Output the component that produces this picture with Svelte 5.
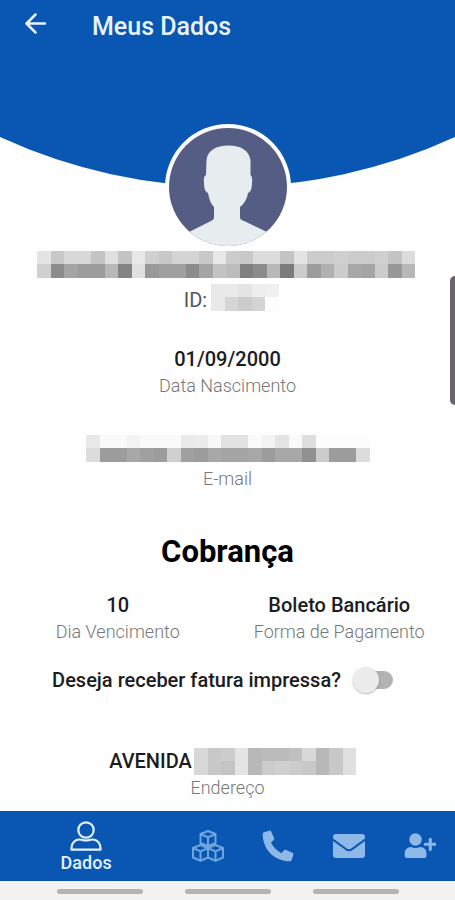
<script>
  const nameBlocks = [
    'e4 c8 d8 d8 c4 e0 c4 e8 d0 c8 d4 d4 c8 e8 cc c8 dc dc c4 e4 cc cc d0 cc cc d0 c4 dc',
    'd0 8c a4 9c 9c b8 84 e0 98 a0 a0 8c a4 c4 bc 80 8c b8 7c cc 9c b0 cc a8 a4 cc 98 b8'
  ];
  const idBlocks = ['e9 ea e4 ee f0', 'e9 d6 cc d4 fd'];
  const emailBlocks = [
    'e8 fa fa f3 fa fa fa ea ec f8 e2 e2 fa f3 e4 fa de fc fc fc fc',
    'dc 9c 9c a8 a0 9c d0 a0 9c a8 a4 a4 a8 9c a8 a8 90 cc 9c 9c dc'
  ];
  const addressBlocks = [
    'd8 c8 cc e4 b8 bb bb c0 d8 b8 c8 e0',
    'd8 c8 c4 e4 b8 cc d0 cc c8 b8 c8 e0'
  ];
  let printed = $state(false);
</script>

{#snippet mosaic(rows, label)}
  <span class="mosaic" role="img" aria-label={label}>
    {#each rows as row}
      <span class="mosaic-row">
        {#each row.split(' ') as tone}
          <i style="background: #{tone}{tone}{tone}"></i>
        {/each}
      </span>
    {/each}
  </span>
{/snippet}

<div class="app">
  <header>
    <div class="bar">
      <a class="back" href="#voltar" aria-label="Voltar">
        <svg width="22" height="22" viewBox="0 0 22 22" fill="none" stroke="#e8f4fd" stroke-width="2.5" stroke-linecap="round" stroke-linejoin="round">
          <path d="M20 10.500H2M10.500 1.500L1.500 10.500l9 9" />
        </svg>
      </a>
      <h1>Meus Dados</h1>
    </div>
    <svg class="curve" viewBox="0 0 455 50" preserveAspectRatio="none" aria-hidden="true">
      <path d="M0 0A545 545 0 0 0 455 0Z" fill="#0a57b3" />
    </svg>
  </header>

  <main>
    <div class="avatar">
      <svg viewBox="0 0 118 118" width="118" height="118" aria-hidden="true">
        <defs><clipPath id="disc"><circle cx="59" cy="59" r="59" /></clipPath></defs>
        <g clip-path="url(#disc)">
          <rect width="118" height="118" fill="#565d84" />
          <path d="M59.500 17.500C47 17.500 38.500 22.500 37.500 32L37 47C35 48 34.500 51 35 55C35 61 36.500 64 39 65C40 71 42 76 45 79V89C45 91 44 92 42 93L21 103.500L0 118H118L97 103.500L75 93C72 92 71 91 71 89V79C75 76 78 71 79 65C81.500 64 83 61 83 55C83.500 51 83 48 81.500 47V32C80 22.500 72 17.500 59.500 17.500Z" fill="#e7edef" />
        </g>
      </svg>
    </div>
    <div class="line name">{@render mosaic(nameBlocks, 'Nome oculto')}</div>
    <div class="line id"><span>ID:</span>{@render mosaic(idBlocks, 'ID oculto')}</div>

    <section class="field birth">
      <strong>01/09/2000</strong>
      <span>Data Nascimento</span>
    </section>
    <section class="field email">
      {@render mosaic(emailBlocks, 'E-mail oculto')}
      <span>E-mail</span>
    </section>

    <h2>Cobrança</h2>
    <div class="columns">
      <section class="field">
        <strong>10</strong>
        <span>Dia Vencimento</span>
      </section>
      <section class="field">
        <strong>Boleto Bancário</strong>
        <span>Forma de Pagamento</span>
      </section>
    </div>

    <label class="toggle">
      <span>Deseja receber fatura impressa?</span>
      <input type="checkbox" role="switch" bind:checked={printed} />
    </label>

    <section class="field address">
      <div class="line"><strong>AVENIDA</strong>{@render mosaic(addressBlocks, 'Endereço oculto')}</div>
      <span>Endereço</span>
    </section>
  </main>

  <nav>
    <a class="active" href="#dados">
      <svg width="32" height="30" viewBox="0 0 32 30" fill="none" stroke="#e4f1fc" stroke-width="2.2" stroke-linejoin="round">
        <circle cx="16" cy="9" r="7.700" />
        <path d="M1.500 28.700V27C1.500 21.500 5.500 18.500 9.500 18.500C12 18.500 13 19.500 16 19.500S20 18.500 22.500 18.500C26.500 18.500 30.500 21.500 30.500 27V28.700Z" />
      </svg>
      <span>Dados</span>
    </a>
    <a href="#produtos" aria-label="Produtos">
      <svg width="32" height="32" viewBox="0 0 32 32" fill="none" stroke="#6fa6df" stroke-width="2" stroke-linejoin="round">
        <path d="M16 1L23.500 4V13L16 16L8.500 13V4ZM8.500 4L16 7.300L23.500 4M16 7.300V16" />
        <path d="M8.500 15L16 18V27.500L8.500 30.800L1 27.500V18ZM1 18L8.500 21.300L16 18M8.500 21.300V30.800" />
        <path d="M23.500 15L31 18V27.500L23.500 30.800L16 27.500V18ZM16 18L23.500 21.300L31 18M23.500 21.300V30.800" />
      </svg>
    </a>
    <a href="#telefone" aria-label="Telefone">
      <svg width="32" height="32" viewBox="0 0 32 32" fill="#8db8e8">
        <path d="M2 2.300L7.300.7Q8.600.3 9.200 1.500L12 8Q12.500 9.300 11.500 10.200L8.900 12.500Q12.500 19.500 19.500 23.200L21.800 20.500Q22.700 19.500 24 20L30.500 22.800Q31.700 23.400 31.300 24.700L29.700 30Q29.300 31.300 27.900 31.300C12.500 31.300.7 19.500.7 4Q.7 2.700 2 2.300Z" />
      </svg>
    </a>
    <a href="#mensagens" aria-label="Mensagens">
      <svg width="32" height="32" viewBox="0 0 32 32" fill="#8db8e8">
        <path d="M3 4H29Q32 4 32 7V8.500L18.500 18.300Q16 20 13.500 18.300L0 8.500V7Q0 4 3 4Z" />
        <path d="M0 11L12.500 20Q16 22.500 19.500 20L32 11V25Q32 28 29 28H3Q0 28 0 25Z" />
      </svg>
    </a>
    <a href="#indicar" aria-label="Indicar amigo">
      <svg width="32" height="32" viewBox="0 0 32 32" fill="#8db8e8">
        <circle cx="11.500" cy="9.500" r="6.200" />
        <path d="M7 17Q11.500 19 16 17Q22.500 17.500 22.500 23.500V26Q22.500 28 20.500 28H2.700Q.7 28 .7 26V23.500Q.7 17.500 7 17Z" />
        <path d="M26.300 9.200V19.400M21.200 14.300H31.400" stroke="#8db8e8" stroke-width="3" stroke-linecap="round" />
      </svg>
    </a>
  </nav>
  <div class="system"><i></i><i></i><i></i></div>
  <div class="edge"></div>
</div>

<style>
  :global(body) {
    background: #fefefe;
  }
  .app {
    position: relative;
    display: flex;
    flex-direction: column;
    min-height: 100vh;
    font-family: Roboto, "Liberation Sans", sans-serif;
    font-size: 20px;
    line-height: 28px;
    color: #1c1c1e;
  }
  .bar {
    display: flex;
    align-items: flex-start;
    gap: 45px;
    box-sizing: border-box;
    height: 137px;
    padding: 13px 25px;
    background: #0a57b3;
  }
  .back {
    display: flex;
    height: 28px;
  }
  h1 {
    margin: 0;
    font-size: 25px;
    font-weight: 500;
    color: #e8f4fd;
  }
  .curve {
    display: block;
    width: 100%;
    height: 50px;
  }
  main {
    display: flex;
    flex: 1;
    flex-direction: column;
    align-items: center;
  }
  .avatar {
    position: relative;
    display: flex;
    margin-top: -63px;
    padding: 4px;
    border-radius: 50%;
    background: #fefefe;
  }
  .mosaic {
    display: block;
  }
  .mosaic-row {
    display: flex;
    height: 13px;
  }
  .mosaic-row:last-child {
    height: 14px;
  }
  .mosaic-row i {
    width: 14px;
  }
  .mosaic-row i:nth-child(2n) {
    width: 13px;
  }
  .line {
    display: flex;
    align-items: center;
  }
  .name {
    margin: 1px 3px 0 0;
  }
  .id {
    align-items: flex-start;
    gap: 4px;
    margin: 6px 0 0 8px;
    line-height: 32px;
    color: #555;
  }
  .field {
    display: flex;
    flex-direction: column;
    align-items: center;
  }
  .field > span:last-child {
    font-size: 18px;
    font-weight: 300;
    line-height: 26px;
    color: #777;
  }
  strong,
  .toggle {
    font-weight: 500;
  }
  .birth {
    margin-top: 29px;
  }
  .email {
    margin-top: 36px;
  }
  .email > span:last-child {
    margin-top: 4px;
  }
  h2 {
    margin: 40px 0 0;
    font-size: 31px;
    line-height: 40px;
    font-weight: 700;
    color: #000;
  }
  .columns {
    display: grid;
    grid-template-columns: 1fr 1fr;
    align-self: stretch;
    margin-top: 19px;
    padding: 0 5px 0 7px;
  }
  .toggle {
    display: flex;
    align-items: center;
    gap: 12px;
    margin: 21px 10px 0 0;
  }
  .toggle input {
    position: relative;
    appearance: none;
    width: 40px;
    height: 26px;
    margin: 0;
  }
  .toggle input::before {
    content: "";
    position: absolute;
    inset: 4px 0 4px 8px;
    border-radius: 9px;
    background: #b2b2b2;
  }
  .toggle input::after {
    content: "";
    position: absolute;
    top: 0;
    left: 0;
    width: 26px;
    height: 26px;
    border-radius: 50%;
    background: #ececec;
    box-shadow: 0 1px 2px #0004;
  }
  .toggle input:checked::after {
    left: 14px;
  }
  .address {
    margin: 53px 0 8px;
  }
  .address .line {
    gap: 2px;
    margin-left: 10px;
  }
  nav {
    display: flex;
    height: 70px;
    background: #0a57b3;
  }
  nav a {
    display: flex;
    flex: 71;
    flex-direction: column;
    align-items: center;
    justify-content: center;
    font-size: 18px;
    font-weight: 500;
    line-height: 20px;
    color: #e4f1fc;
    text-decoration: none;
  }
  nav .active {
    flex: 173;
    gap: 2px;
    padding-top: 2px;
  }
  .system {
    display: flex;
    justify-content: center;
    gap: 42px;
    padding: 8px 0 6px;
    background: #f2f2f2;
  }
  .system i {
    width: 86px;
    height: 5px;
    border-radius: 3px;
    background: #b5b4b4;
  }
  .edge {
    position: absolute;
    top: 276px;
    right: 0;
    width: 5px;
    height: 129px;
    border-radius: 5px 0 0 5px;
    background: #67646e;
  }
</style>
